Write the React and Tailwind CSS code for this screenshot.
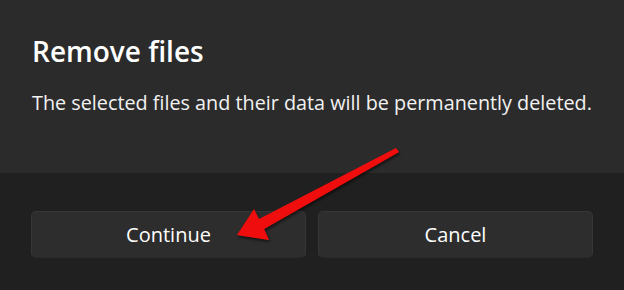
import React from "react";

const Arrow = () => (
  <svg
    className="absolute left-0 top-0 pointer-events-none"
    width="624"
    height="290"
    viewBox="0 0 624 290"
  >
    <defs>
      <filter id="shadow" x="-20%" y="-20%" width="140%" height="140%">
        <feDropShadow dx="1" dy="2" stdDeviation="1.5" floodColor="#000" floodOpacity="0.6" />
      </filter>
    </defs>
    <polygon
      points="237,235 254,209 259,219 396,148 399,152 264,229 269,240"
      fill="#f00d0d"
      filter="url(#shadow)"
    />
  </svg>
);

const App = () => {
  return (
    <div
      className="relative w-[624px] h-[290px] overflow-hidden bg-[#202020] text-white"
      style={{ fontFamily: '"Open Sans", "Noto Sans", sans-serif' }}
    >
      <section className="h-[173px] bg-[#2b2b2b] px-[32px] pt-[31px]">
        <h1 className="text-[28px] font-semibold leading-[40px]">Remove files</h1>
        <p className="mt-[18px] text-[19.8px] leading-[28px] text-[#f2f2f2] whitespace-nowrap">
          The selected files and their data will be permanently deleted.
        </p>
      </section>

      <footer className="flex gap-[12px] px-[31px] pt-[38px]">
        <button className="w-[275px] h-[47px] rounded-[5px] bg-[#2d2d2d] border border-[#363636] border-b-[#2a2a2a] text-[20px] text-white">
          Continue
        </button>
        <button className="w-[275px] h-[47px] rounded-[5px] bg-[#2d2d2d] border border-[#363636] border-b-[#2a2a2a] text-[20px] text-white">
          Cancel
        </button>
      </footer>

      <Arrow />
    </div>
  );
};

export default App;
